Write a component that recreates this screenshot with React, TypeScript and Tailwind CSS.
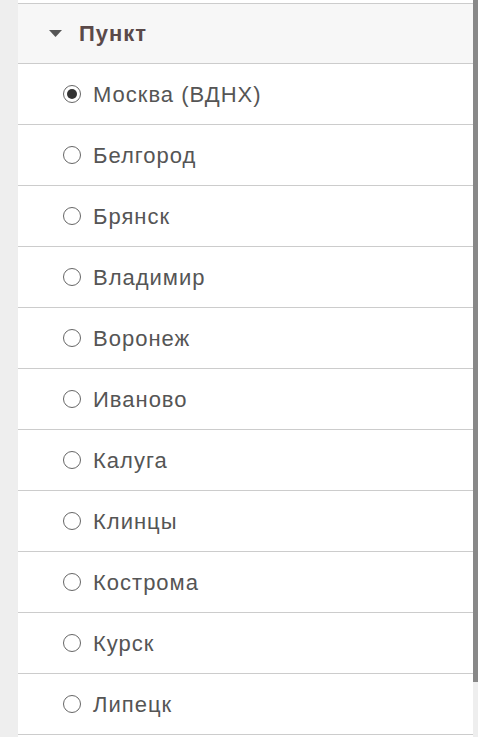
const cities = [
  'Москва (ВДНХ)',
  'Белгород',
  'Брянск',
  'Владимир',
  'Воронеж',
  'Иваново',
  'Калуга',
  'Клинцы',
  'Кострома',
  'Курск',
  'Липецк',
]

function Radio({ checked }: { checked: boolean }) {
  return (
    <span className="flex h-[18px] w-[18px] shrink-0 items-center justify-center rounded-full border border-[#666] bg-white">
      {checked && <span className="h-[10px] w-[10px] rounded-full bg-[#333]" />}
    </span>
  )
}

export default function App() {
  return (
    <div className="flex h-[737px] w-[478px] overflow-hidden bg-white font-['Liberation_Sans',Arial,sans-serif]">
      <div className="w-[18px] shrink-0 bg-[#eeeeee]" />
      <div className="flex-1">
        <div className="mt-[3px] border-t border-[#cccccc]">
          <div className="flex h-[60px] items-center gap-[17px] border-b border-[#cccccc] bg-[#f7f7f7] pl-[31px]">
            <svg width="13" height="7" viewBox="0 0 13 7" className="mt-[-1px]">
              <path d="M0 0 H13 L6.5 7 Z" fill="#555" />
            </svg>
            <span className="text-[22px] font-bold tracking-[1px] text-[#5a4949]">Пункт</span>
          </div>
          {cities.map((c, i) => (
            <label
              key={c}
              className="flex h-[61px] items-center gap-[12px] border-b border-[#cccccc] pl-[45px]"
            >
              <Radio checked={i === 0} />
              <span className="text-[22px] tracking-[1px] text-[#555555]">{c}</span>
            </label>
          ))}
        </div>
      </div>
      <div className="flex w-[5px] shrink-0 flex-col bg-[#eeeeee]">
        <div className="h-[682px] bg-[#888888]" />
      </div>
    </div>
  )
}
